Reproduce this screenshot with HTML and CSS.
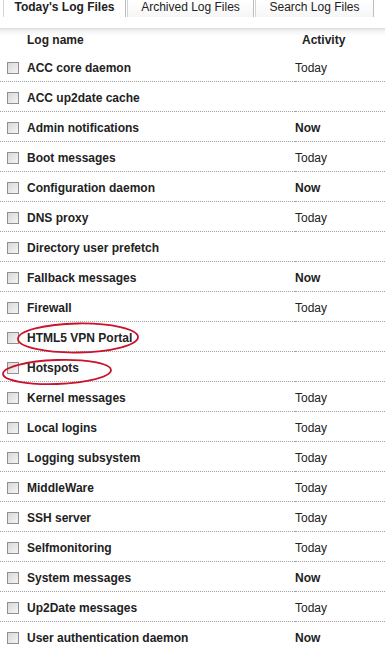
FILE: index.html
```html
<!DOCTYPE html>
<html lang="en">
<head>
  <meta charset="UTF-8">
  <title>Log Files</title>
  <link rel="stylesheet" href="styles.css">
</head>
<body>
  <div class="tabs">
    <div class="tab active t1">Today's Log Files</div>
    <div class="tab t2">Archived Log Files</div>
    <div class="tab t3">Search Log Files</div>
  </div>

  <table class="logs">
    <thead>
      <tr>
        <th class="name">Log name</th>
        <th class="activity">Activity</th>
      </tr>
    </thead>
    <tbody>
      <tr><td class="name"><span class="chk"></span>ACC core daemon</td><td class="activity">Today</td></tr>
      <tr><td class="name"><span class="chk"></span>ACC up2date cache</td><td class="activity"></td></tr>
      <tr><td class="name"><span class="chk"></span>Admin notifications</td><td class="activity now">Now</td></tr>
      <tr><td class="name"><span class="chk"></span>Boot messages</td><td class="activity">Today</td></tr>
      <tr><td class="name"><span class="chk"></span>Configuration daemon</td><td class="activity now">Now</td></tr>
      <tr><td class="name"><span class="chk"></span>DNS proxy</td><td class="activity">Today</td></tr>
      <tr><td class="name"><span class="chk"></span>Directory user prefetch</td><td class="activity"></td></tr>
      <tr><td class="name"><span class="chk"></span>Fallback messages</td><td class="activity now">Now</td></tr>
      <tr><td class="name"><span class="chk"></span>Firewall</td><td class="activity">Today</td></tr>
      <tr><td class="name"><span class="chk"></span>HTML5 VPN Portal</td><td class="activity"></td></tr>
      <tr><td class="name"><span class="chk"></span>Hotspots</td><td class="activity"></td></tr>
      <tr><td class="name"><span class="chk"></span>Kernel messages</td><td class="activity">Today</td></tr>
      <tr><td class="name"><span class="chk"></span>Local logins</td><td class="activity">Today</td></tr>
      <tr><td class="name"><span class="chk"></span>Logging subsystem</td><td class="activity">Today</td></tr>
      <tr><td class="name"><span class="chk"></span>MiddleWare</td><td class="activity">Today</td></tr>
      <tr><td class="name"><span class="chk"></span>SSH server</td><td class="activity">Today</td></tr>
      <tr><td class="name"><span class="chk"></span>Selfmonitoring</td><td class="activity">Today</td></tr>
      <tr><td class="name"><span class="chk"></span>System messages</td><td class="activity now">Now</td></tr>
      <tr><td class="name"><span class="chk"></span>Up2Date messages</td><td class="activity">Today</td></tr>
      <tr><td class="name"><span class="chk"></span>User authentication daemon</td><td class="activity now">Now</td></tr>
    </tbody>
  </table>

  <!-- hand drawn marks over the screenshot -->
  <svg class="marks" width="385" height="649" viewBox="0 0 385 649">
    <ellipse cx="78" cy="338" rx="60" ry="14.5" transform="rotate(-1 78 338)" />
    <ellipse cx="57" cy="372" rx="54" ry="12" transform="rotate(-2 57 372)" />
  </svg>
</body>
</html>
```
FILE: styles.css
```css
body {
  font-family: "Liberation Sans", Arial, sans-serif;
  font-size: 12px;
  color: #222;
  margin: 0;
  background: #fff;
  position: relative;
  overflow: hidden;
}
.tabs {
  display: flex;
  padding-left: 3px;
  height: 18px;
}
.tab {
  line-height: 14px;
  height: 17px;
  text-align: center;
  border-left: 1px solid #d4d4d4;
  border-right: 1px solid #bdbdbd;
  background: linear-gradient(#fff, #f6f6f6);
  margin-right: 1px;
}
.tab.active {
  font-weight: bold;
  background: #fff;
}
.t1 { width: 121px; }
.t2 { width: 125px; }
.t3 { width: 117px; }

.logs {
  width: 100%;
  border-collapse: collapse;
  margin-top: 10px;
}
.logs th {
  height: 24px;
  padding: 0;
  font-weight: bold;
  text-align: left;
  background: linear-gradient(#dcdcdc, #f3f3f3 3px, #fff 8px);
}
.logs th.name { padding-left: 27px; }
.logs th.activity { padding-left: 7px; }
.logs td {
  height: 27px;
  padding: 2px 0 0;
  border-bottom: 1px dotted #a0a0a0;
}
.logs td.name {
  font-weight: bold;
  padding-left: 7px;
}
.logs td.activity {
  width: 90px;
}
.logs td.now {
  font-weight: bold;
}
.chk {
  display: inline-block;
  width: 10px;
  height: 10px;
  border: 1px solid #8f8f8f;
  background: linear-gradient(135deg, #d8d8d8, #f4f4f4);
  vertical-align: -2px;
  margin-right: 8px;
}
.marks {
  position: absolute;
  left: 0;
  top: 0;
  pointer-events: none;
}
.marks ellipse {
  fill: none;
  stroke: #c8142c;
  stroke-width: 1.8;
}
```
